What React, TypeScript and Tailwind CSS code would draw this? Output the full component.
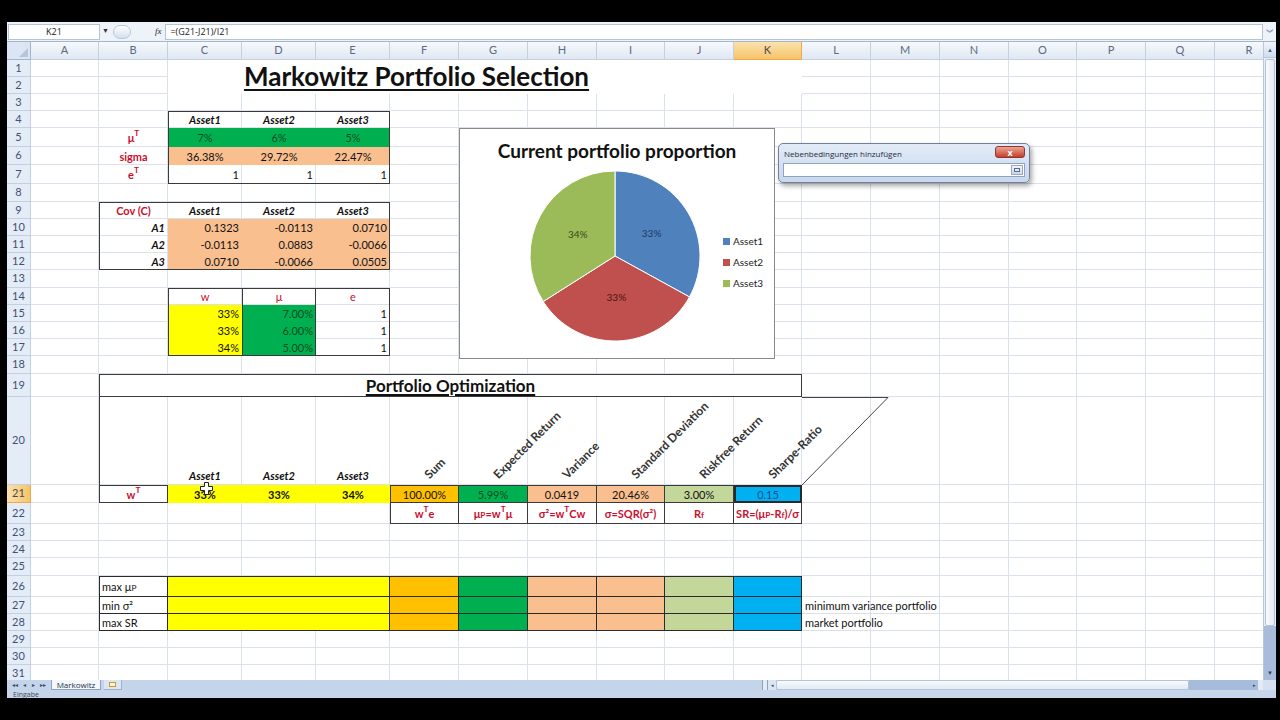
import React from "react";

const COLS = ["A", "B", "C", "D", "E", "F", "G", "H", "I", "J", "K", "L", "M", "N", "O", "P", "Q", "R"];

function Cell({ className = "", children }: { className?: string; children?: React.ReactNode }) {
  return (
    <div className={`flex items-center whitespace-nowrap px-[3px] text-[11px] leading-none ${className}`}>
      {children}
    </div>
  );
}

function GridLines() {
  const items: React.ReactNode[] = [];
  items.push(
    <div
      key="corner"
      style={{ gridRow: 1, gridColumn: 1 }}
      className="flex items-end justify-end border-r border-b border-[#9eb6ce] bg-[#dbe5f3] p-[2px]"
    >
      <div className="h-0 w-0 border-b-[9px] border-l-[9px] border-b-[#b5c6dc] border-l-transparent" />
    </div>
  );
  COLS.forEach((c, i) => {
    items.push(
      <div
        key={c}
        style={{ gridRow: 1, gridColumn: i + 2 }}
        className={
          c === "K"
            ? "flex items-center justify-center border-r border-b border-[#f0a84a] bg-linear-to-b from-[#fbe2ad] to-[#f5c468] text-[11px] text-[#4a4a52]"
            : "flex items-center justify-center border-r border-b border-[#c3d0e1] bg-linear-to-b from-[#f6f9fd] to-[#e0e8f3] text-[11px] text-[#5d6a7e]"
        }
      >
        {c}
      </div>
    );
  });
  for (let r = 1; r <= 31; r++) {
    items.push(
      <div
        key={`h${r}`}
        style={{ gridRow: r + 1, gridColumn: 1 }}
        className={
          r === 21
            ? "flex items-center justify-center border-r border-b border-[#f0a84a] bg-linear-to-r from-[#fbe2ad] to-[#f5c468] text-[11px] text-[#4a4a52]"
            : "flex items-center justify-center border-r border-b border-[#c3d0e1] bg-[#e4ecf7] text-[11px] text-[#3f5272]"
        }
      >
        {r}
      </div>
    );
    for (let c = 2; c <= 19; c++) {
      items.push(
        <div
          key={`${r}-${c}`}
          style={{ gridRow: r + 1, gridColumn: c }}
          className="border-r border-b border-[#dbe1ea] bg-white"
        />
      );
    }
  }
  return <>{items}</>;
}

function Pie() {
  const r = 85;
  const c = 85;
  const data = [
    { v: 0.33, fill: "#4f81bd", text: "#1f3864" },
    { v: 0.33, fill: "#c0504d", text: "#4a1412" },
    { v: 0.34, fill: "#9bbb59", text: "#384a17" },
  ];
  let start = -Math.PI / 2;
  return (
    <svg width="170" height="170" viewBox="0 0 170 170" className="shrink-0">
      {data.map((d, i) => {
        const end = start + d.v * 2 * Math.PI;
        const x1 = c + r * Math.cos(start);
        const y1 = c + r * Math.sin(start);
        const x2 = c + r * Math.cos(end);
        const y2 = c + r * Math.sin(end);
        const mid = (start + end) / 2;
        const lx = c + r * 0.5 * Math.cos(mid);
        const ly = c + r * 0.5 * Math.sin(mid);
        start = end;
        return (
          <g key={i}>
            <path d={`M${c} ${c} L${x1} ${y1} A${r} ${r} 0 0 1 ${x2} ${y2} Z`} fill={d.fill} stroke="#ffffff" strokeWidth="1" />
            <text x={lx} y={ly} fill={d.text} fontSize="10" fontFamily="Lato, sans-serif" textAnchor="middle" dominantBaseline="middle">
              {Math.round(d.v * 100)}%
            </text>
          </g>
        );
      })}
    </svg>
  );
}

function Chart() {
  return (
    <div className="col-start-8 col-end-13 row-start-6 row-end-20 h-[231px] w-[316px] self-start justify-self-start border border-[#8a8a8a] bg-white">
      <div className="flex h-[42px] items-center justify-center text-[19px] font-bold leading-none text-[#111]">
        Current portfolio proportion
      </div>
      <div className="flex pl-[70px]">
        <Pie />
        <div className="ml-[23px] mt-[63px] flex flex-col gap-[7px] text-[10px] text-[#222]">
          {[
            { n: "Asset1", c: "bg-[#4f81bd]" },
            { n: "Asset2", c: "bg-[#c0504d]" },
            { n: "Asset3", c: "bg-[#9bbb59]" },
          ].map((l) => (
            <div key={l.n} className="flex h-[14px] items-center gap-[3px]">
              <div className={`h-[7px] w-[7px] ${l.c}`} />
              {l.n}
            </div>
          ))}
        </div>
      </div>
    </div>
  );
}

function Dialog() {
  return (
    <div className="absolute left-[771px] top-[101px] h-[40px] w-[252px] rounded-[5px] border border-[#6f819b] bg-linear-to-b from-[#e2ebf7] to-[#c9d8ed] shadow-[2px_3px_5px_rgba(0,0,0,0.35)] [font-family:'Open_Sans',sans-serif]">
      <div className="flex h-[19px] items-start justify-between pl-[5px] pr-[4px] pt-[2px]">
        <span className="pt-[2px] text-[8px] text-[#1e2a3a]">Nebenbedingungen hinzufügen</span>
        <div className="flex h-[12px] w-[30px] items-center justify-center rounded-[3px] border border-[#8c3a2e] bg-linear-to-b from-[#eaa596] to-[#c43b28] text-[9px] font-bold leading-none text-white">
          x
        </div>
      </div>
      <div className="mx-[4px] flex h-[14px] items-center justify-end border border-[#8fa3bf] bg-white">
        <div className="mr-[1px] flex h-[10px] w-[12px] items-center justify-center border border-[#9aaac0] bg-linear-to-b from-[#f3f6fa] to-[#c9d6e6]">
          <div className="h-[4px] w-[6px] border border-[#5b6f8d] bg-[#dfe8f4]" />
        </div>
      </div>
    </div>
  );
}

const RED = "font-bold text-[#c8102e]";
const HEAD = "justify-center font-bold italic";

const rotated = [
  { col: "col-start-7", text: "Sum" },
  { col: "col-start-8", text: "Expected Return" },
  { col: "col-start-9", text: "Variance" },
  { col: "col-start-10", text: "Standard Deviation" },
  { col: "col-start-11", text: "Riskfree Return" },
  { col: "col-start-12", text: "Sharpe-Ratio" },
];

const optRows = [
  { row: "row-start-27", label: <>max μ<sub>P</sub></>, note: "" },
  { row: "row-start-28", label: <>min σ²</>, note: "minimum variance portfolio" },
  { row: "row-start-29", label: <>max SR</>, note: "market portfolio" },
];

const optCols = [
  "col-start-4 col-end-7 bg-[#ffff00]",
  "col-start-7 bg-[#ffc000]",
  "col-start-8 bg-[#00b050]",
  "col-start-9 bg-[#fabf8f]",
  "col-start-10 bg-[#fabf8f]",
  "col-start-11 bg-[#c4d79b]",
  "col-start-12 bg-[#00b0f0]",
];

function Sheet() {
  return (
    <div className="relative grid h-[638px] w-[1256px] shrink-0 grid-cols-[24px_68px_69px_74px_74px_74px_69px_69px_69px_68px_69px_68px_69px_69px_69px_68px_69px_69px_69px] grid-rows-[18px_17px_17px_17px_17px_19px_18px_19px_18px_17px_17px_17px_17px_18px_17px_17px_17px_17px_18px_23px_88px_18px_21px_17px_17px_18px_21px_17px_17px_17px_17px_17px] overflow-hidden text-[#111]">
      <GridLines />

      {/* title */}
      <div className="col-start-4 col-end-13 row-start-2 row-end-4 flex items-center bg-white">
        <div className="w-[497px] pb-[2px] text-center text-[26px] font-bold leading-none underline decoration-[2px] underline-offset-[3px]">
          Markowitz Portfolio Selection
        </div>
      </div>

      {/* mu / sigma / e table */}
      <Cell className="col-start-4 row-start-5 justify-center font-bold italic">Asset1</Cell>
      <Cell className="col-start-5 row-start-5 justify-center font-bold italic">Asset2</Cell>
      <Cell className="col-start-6 row-start-5 justify-center font-bold italic">Asset3</Cell>
      <Cell className={`col-start-3 row-start-6 justify-center ${RED}`}>μ<sup>T</sup></Cell>
      <Cell className={`col-start-3 row-start-7 justify-center ${RED}`}>sigma</Cell>
      <Cell className={`col-start-3 row-start-8 justify-center ${RED}`}>e<sup>T</sup></Cell>
      <Cell className="col-start-4 row-start-6 justify-center bg-[#00b050] text-[#0b4d22]">7%</Cell>
      <Cell className="col-start-5 row-start-6 justify-center bg-[#00b050] text-[#0b4d22]">6%</Cell>
      <Cell className="col-start-6 row-start-6 justify-center bg-[#00b050] text-[#0b4d22]">5%</Cell>
      <Cell className="col-start-4 row-start-7 justify-center bg-[#fabf8f]">36.38%</Cell>
      <Cell className="col-start-5 row-start-7 justify-center bg-[#fabf8f]">29.72%</Cell>
      <Cell className="col-start-6 row-start-7 justify-center bg-[#fabf8f]">22.47%</Cell>
      <Cell className="col-start-4 row-start-8 justify-end">1</Cell>
      <Cell className="col-start-5 row-start-8 justify-end">1</Cell>
      <Cell className="col-start-6 row-start-8 justify-end">1</Cell>
      <div className="col-start-4 col-end-7 row-start-5 row-end-9 border border-[#3a3a3a]" />

      {/* covariance */}
      <Cell className={`col-start-3 row-start-10 justify-center ${RED}`}>Cov (C)</Cell>
      <Cell className={`col-start-4 row-start-10 ${HEAD}`}>Asset1</Cell>
      <Cell className={`col-start-5 row-start-10 ${HEAD}`}>Asset2</Cell>
      <Cell className={`col-start-6 row-start-10 ${HEAD}`}>Asset3</Cell>
      <Cell className="col-start-3 row-start-11 justify-end font-bold italic">A1</Cell>
      <Cell className="col-start-3 row-start-12 justify-end font-bold italic">A2</Cell>
      <Cell className="col-start-3 row-start-13 justify-end font-bold italic">A3</Cell>
      <Cell className="col-start-4 row-start-11 justify-end bg-[#fabf8f]">0.1323</Cell>
      <Cell className="col-start-5 row-start-11 justify-end bg-[#fabf8f]">-0.0113</Cell>
      <Cell className="col-start-6 row-start-11 justify-end bg-[#fabf8f]">0.0710</Cell>
      <Cell className="col-start-4 row-start-12 justify-end bg-[#fabf8f]">-0.0113</Cell>
      <Cell className="col-start-5 row-start-12 justify-end bg-[#fabf8f]">0.0883</Cell>
      <Cell className="col-start-6 row-start-12 justify-end bg-[#fabf8f]">-0.0066</Cell>
      <Cell className="col-start-4 row-start-13 justify-end bg-[#fabf8f]">0.0710</Cell>
      <Cell className="col-start-5 row-start-13 justify-end bg-[#fabf8f]">-0.0066</Cell>
      <Cell className="col-start-6 row-start-13 justify-end bg-[#fabf8f]">0.0505</Cell>
      <div className="col-start-3 col-end-7 row-start-10 row-end-14 border border-[#3a3a3a]" />

      {/* w / mu / e */}
      <Cell className="col-start-4 row-start-15 justify-center text-[#c8102e]">w</Cell>
      <Cell className="col-start-5 row-start-15 justify-center text-[#c8102e]">μ</Cell>
      <Cell className="col-start-6 row-start-15 justify-center text-[#c8102e]">e</Cell>
      <Cell className="col-start-4 row-start-16 justify-end bg-[#ffff00]">33%</Cell>
      <Cell className="col-start-4 row-start-17 justify-end bg-[#ffff00]">33%</Cell>
      <Cell className="col-start-4 row-start-18 justify-end bg-[#ffff00]">34%</Cell>
      <Cell className="col-start-5 row-start-16 justify-end bg-[#00b050] text-[#0b4d22]">7.00%</Cell>
      <Cell className="col-start-5 row-start-17 justify-end bg-[#00b050] text-[#0b4d22]">6.00%</Cell>
      <Cell className="col-start-5 row-start-18 justify-end bg-[#00b050] text-[#0b4d22]">5.00%</Cell>
      <Cell className="col-start-6 row-start-16 justify-end">1</Cell>
      <Cell className="col-start-6 row-start-17 justify-end">1</Cell>
      <Cell className="col-start-6 row-start-18 justify-end">1</Cell>
      <div className="col-start-4 col-end-7 row-start-15 row-end-19 border border-[#3a3a3a]" />
      <div className="col-start-5 row-start-15 row-end-19 border-x border-[#3a3a3a]" />

      <Chart />

      {/* portfolio optimization */}
      <div className="col-start-3 col-end-13 row-start-20 flex items-center justify-center border border-[#3a3a3a] bg-white">
        <span className="text-[17px] font-bold leading-none underline decoration-[1.5px] underline-offset-[2px]">
          Portfolio Optimization
        </span>
      </div>
      <div className="col-start-3 row-start-21 border-l border-[#3a3a3a]" />
      <Cell className="col-start-4 row-start-21 items-end justify-center pb-[4px] font-bold italic">Asset1</Cell>
      <Cell className="col-start-5 row-start-21 items-end justify-center pb-[4px] font-bold italic">Asset2</Cell>
      <Cell className="col-start-6 row-start-21 items-end justify-center pb-[4px] font-bold italic">Asset3</Cell>
      {rotated.map((h) => (
        <div key={h.text} className={`${h.col} row-start-21 relative`}>
          <span className="absolute bottom-[4px] left-[41px] origin-bottom-left -rotate-45 whitespace-nowrap text-[12px] font-bold leading-none text-[#333]">
            {h.text}
          </span>
        </div>
      ))}
      <svg className="col-start-13 col-end-15 row-start-21 self-start justify-self-start overflow-visible" width="87" height="88">
        <line x1="0" y1="0.5" x2="86" y2="0.5" stroke="#444" strokeWidth="1" />
        <line x1="86" y1="0.5" x2="0" y2="88" stroke="#444" strokeWidth="1" />
      </svg>

      {/* row 21 */}
      <Cell className={`col-start-3 row-start-22 justify-center border border-[#3a3a3a] ${RED}`}>w<sup>T</sup></Cell>
      <Cell className="relative col-start-4 row-start-22 justify-center bg-[#ffff00] font-bold">
        33%
        <svg className="absolute left-[32px] top-[-3px]" width="13" height="13" viewBox="0 0 13 13">
          <path d="M4.5 0.5h4v4h4v4h-4v4h-4v-4h-4v-4h4z" fill="#ffffff" stroke="#222" strokeWidth="1" />
        </svg>
      </Cell>
      <Cell className="col-start-5 row-start-22 justify-center bg-[#ffff00] font-bold">33%</Cell>
      <Cell className="col-start-6 row-start-22 justify-center bg-[#ffff00] font-bold">34%</Cell>
      <Cell className="col-start-7 row-start-22 justify-center border border-[#3a3a3a] bg-[#ffc000]">100.00%</Cell>
      <Cell className="col-start-8 row-start-22 justify-center border-y border-r border-[#3a3a3a] bg-[#00b050] text-[#0b4d22]">5.99%</Cell>
      <Cell className="col-start-9 row-start-22 justify-center border-y border-r border-[#3a3a3a] bg-[#fabf8f]">0.0419</Cell>
      <Cell className="col-start-10 row-start-22 justify-center border-y border-r border-[#3a3a3a] bg-[#fabf8f]">20.46%</Cell>
      <Cell className="col-start-11 row-start-22 justify-center border-y border-r border-[#3a3a3a] bg-[#c4d79b]">3.00%</Cell>
      <Cell className="col-start-12 row-start-22 justify-center border-2 border-[#2a2a2a] bg-[#00b0f0] text-[#1f4e8c]">0.15</Cell>

      {/* row 22 formulas */}
      <Cell className={`col-start-7 row-start-23 justify-center border-x border-b border-[#3a3a3a] ${RED}`}>w<sup>T</sup>e</Cell>
      <Cell className={`col-start-8 row-start-23 justify-center border-r border-b border-[#3a3a3a] ${RED}`}>μ<sub>P</sub>=w<sup>T</sup>μ</Cell>
      <Cell className={`col-start-9 row-start-23 justify-center border-r border-b border-[#3a3a3a] ${RED}`}>σ²=w<sup>T</sup>Cw</Cell>
      <Cell className={`col-start-10 row-start-23 justify-center border-r border-b border-[#3a3a3a] ${RED}`}>σ=SQR(σ²)</Cell>
      <Cell className={`col-start-11 row-start-23 justify-center border-r border-b border-[#3a3a3a] ${RED}`}>R<sub>f</sub></Cell>
      <Cell className={`col-start-12 row-start-23 justify-center border-r border-b border-[#3a3a3a] px-0 text-[10.5px] ${RED}`}>SR=(μ<sub>P</sub>-R<sub>f</sub>)/σ</Cell>

      {/* optimisation table */}
      {optRows.map((r) => (
        <React.Fragment key={r.row}>
          <Cell className={`${r.row} col-start-3 border-r border-b border-[#2a2a2a]`}>{r.label}</Cell>
          {optCols.map((c) => (
            <div key={c} className={`${r.row} ${c} border-r border-b border-[#2a2a2a]`} />
          ))}
          {r.note && <Cell className={`${r.row} col-start-13`}>{r.note}</Cell>}
        </React.Fragment>
      ))}
      <div className="col-start-3 col-end-13 row-start-27 row-end-30 border-t border-l border-[#2a2a2a]" />

      <Dialog />
    </div>
  );
}

function VScroll() {
  return (
    <div className="flex w-[13px] shrink-0 flex-col border-l border-[#b8c7db] bg-[#e9eff7]">
      <div className="flex h-[16px] items-center justify-center border-b border-[#b8c7db] bg-linear-to-b from-[#f2f6fb] to-[#cfdcee] text-[6px] text-[#4d5f7c]">
        ▲
      </div>
      <div className="mx-[1px] mt-[1px] h-[567px] rounded-[2px] border border-[#b3c4da] bg-linear-to-r from-[#f8fafd] to-[#e6ecf5]" />
      <div className="flex flex-1 items-end justify-center bg-[#a7bcdb] pb-[3px] text-[6px] text-[#33425c]">▼</div>
    </div>
  );
}

function TabBar() {
  return (
    <div className="flex h-[10px] shrink-0 items-stretch bg-[#c4d4ea] text-[8px] leading-none [font-family:'Open_Sans',sans-serif]">
      <div className="flex w-[44px] items-center justify-around px-[2px] text-[6px] text-[#3b4a63]">
        <span>◂◂</span>
        <span>◂</span>
        <span>▸</span>
        <span>▸▸</span>
      </div>
      <div className="flex w-[50px] items-center justify-center border-x border-b border-[#8ea3c0] bg-[#f4f7fb] text-[#20304a]">
        Markowitz
      </div>
      <div className="ml-[3px] flex w-[18px] items-center justify-center border-r border-b border-[#9fb2cc] bg-[#dce6f3]">
        <div className="h-[5px] w-[7px] border border-[#c49a3a] bg-[#fff3c8]" />
      </div>
      <div className="flex-1" />
      <div className="w-[6px] border-x border-[#8ea3c0] bg-[#e3eaf4]" />
      <div className="flex w-[8px] items-center justify-center bg-[#dce6f3] text-[5px] text-[#33425c]">◂</div>
      <div className="w-[413px] rounded-[2px] border border-[#b3c4da] bg-linear-to-b from-[#f8fafd] to-[#e3eaf4]" />
      <div className="w-[61px] bg-[#a7bcdb]" />
      <div className="flex w-[8px] items-center justify-center bg-[#a7bcdb] text-[5px] text-[#33425c]">▸</div>
      <div className="w-[5px] bg-[#e3eaf4]" />
      <div className="w-[13px] bg-[#d5e1f0]" />
    </div>
  );
}

export default function App() {
  return (
    <div className="flex h-[720px] w-[1280px] flex-col overflow-hidden bg-black [font-family:Lato,sans-serif]">
      <div className="h-[22px] shrink-0" />
      <div className="flex h-[676px] shrink-0">
        <div className="w-[7px] shrink-0" />
        <div className="flex w-[1269px] shrink-0 flex-col bg-[#dfe8f5]">
          {/* formula bar */}
          <div className="flex h-[20px] shrink-0 items-center border-b border-[#a5b6cc] bg-[#eef3fa] text-[9px] text-[#222] [font-family:'Open_Sans',sans-serif]">
            <div className="ml-[1px] flex h-[16px] w-[92px] items-center justify-center border border-[#b4c3d6] bg-white">K21</div>
            <span className="ml-[2px] text-[7px] text-[#333]">▼</span>
            <div className="ml-[4px] h-[14px] w-[18px] rounded-full border border-[#b9c8da] bg-linear-to-b from-white to-[#d4dfee]" />
            <span className="ml-[24px] text-[9px] italic [font-family:'Liberation_Serif',serif]">fx</span>
            <div className="ml-[4px] flex h-[16px] flex-1 items-center border border-[#b4c3d6] bg-white pl-[4px]">
              =(G21-J21)/I21
            </div>
            <div className="flex w-[13px] items-center justify-center text-[8px] text-[#4d5f7c]">︾</div>
          </div>
          <div className="flex h-[638px] shrink-0">
            <Sheet />
            <VScroll />
          </div>
          <TabBar />
          <div className="flex h-[8px] shrink-0 items-center overflow-hidden bg-[#c6d5e9] pl-[6px] text-[7px] leading-none text-[#3a4a62] [font-family:'Open_Sans',sans-serif]">
            Eingabe
          </div>
        </div>
      </div>
    </div>
  );
}
